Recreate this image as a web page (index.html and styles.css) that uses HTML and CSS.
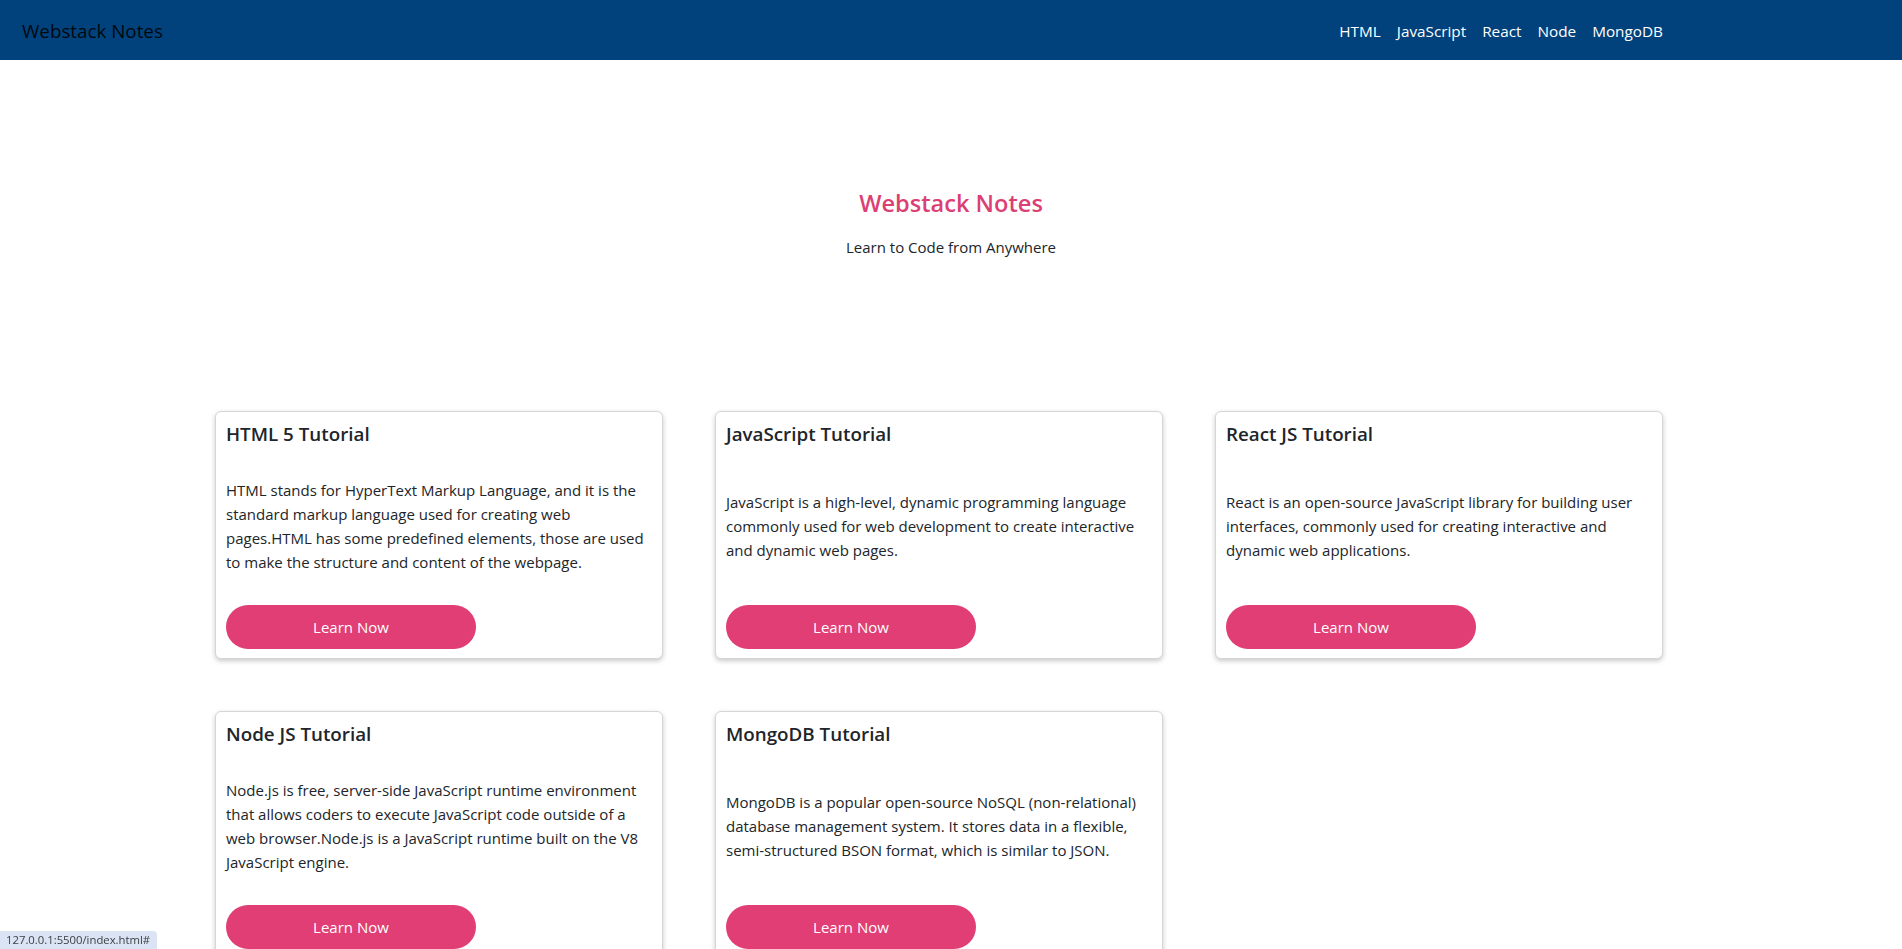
FILE: index.html
```html
<!DOCTYPE html>
<html lang="en">
<head>
<meta charset="utf-8">
<title>Webstack Notes</title>
<link rel="stylesheet" href="styles.css">
</head>
<body>
<nav class="navbar">
  <a class="brand" href="#">Webstack Notes</a>
  <ul class="nav-links">
    <li><a href="#">HTML</a></li>
    <li><a href="#">JavaScript</a></li>
    <li><a href="#">React</a></li>
    <li><a href="#">Node</a></li>
    <li><a href="#">MongoDB</a></li>
  </ul>
</nav>

<header class="hero">
  <h1 class="hero-title">Webstack Notes</h1>
  <p class="hero-sub">Learn to Code from Anywhere</p>
</header>

<main class="cards-wrap">
  <div class="cards">
    <div class="card">
      <h5 class="card-title">HTML 5 Tutorial</h5>
      <p class="card-text">HTML stands for HyperText Markup Language, and it is the standard markup language used for creating web pages.HTML has some predefined elements, those are used to make the structure and content of the webpage.</p>
      <a class="btn" href="#">Learn Now</a>
    </div>
    <div class="card">
      <h5 class="card-title">JavaScript Tutorial</h5>
      <p class="card-text">JavaScript is a high-level, dynamic programming language commonly used for web development to create interactive and dynamic web pages.</p>
      <a class="btn" href="#">Learn Now</a>
    </div>
    <div class="card">
      <h5 class="card-title">React JS Tutorial</h5>
      <p class="card-text">React is an open-source JavaScript library for building user interfaces, commonly used for creating interactive and dynamic web applications.</p>
      <a class="btn" href="#">Learn Now</a>
    </div>
    <div class="card">
      <h5 class="card-title">Node JS Tutorial</h5>
      <p class="card-text">Node.js is free, server-side JavaScript runtime environment that allows coders to execute JavaScript code outside of a web browser.Node.js is a JavaScript runtime built on the V8 JavaScript engine.</p>
      <a class="btn" href="#">Learn Now</a>
    </div>
    <div class="card">
      <h5 class="card-title">MongoDB Tutorial</h5>
      <p class="card-text">MongoDB is a popular open-source NoSQL (non-relational) database management system. It stores data in a flexible, semi-structured BSON format, which is similar to JSON.</p>
      <a class="btn" href="#">Learn Now</a>
    </div>
  </div>
</main>

<div class="status-bar">127.0.0.1:5500/index.html#</div>
</body>
</html>
```
FILE: styles.css
```css
* { box-sizing: border-box; }

html, body {
  margin: 0;
  padding: 0;
}

body {
  font-family: "Open Sans", "Noto Sans", "Liberation Sans", sans-serif;
  font-size: 15px;
  line-height: 24px;
  color: #212529;
  background: #ffffff;
}

a { text-decoration: none; }

/* Navbar */
.navbar {
  height: 60px;
  background: #01427c;
  display: flex;
  align-items: center;
  justify-content: space-between;
  padding: 2px 231px 0 22px;
}

.brand {
  font-size: 18.8px;
  line-height: 28px;
  color: rgba(0, 0, 0, 0.9);
}

.nav-links {
  list-style: none;
  display: flex;
  margin: 0;
  padding: 0;
}

.nav-links a {
  display: block;
  padding: 4px 8px;
  font-size: 15.3px;
  line-height: 24px;
  color: #ffffff;
}

/* Hero */
.hero {
  text-align: center;
  padding: 129px 0 0;
}

.hero-title {
  margin: 0 0 17px;
  font-size: 23.6px;
  line-height: 29px;
  font-weight: 600;
  color: #dc3f73;
}

.hero-sub {
  margin: 0;
  font-size: 15px;
  line-height: 24px;
}

/* Cards */
.cards-wrap {
  width: 1448px;
  margin: 152px 0 0 215px;
}

.cards {
  display: grid;
  grid-template-columns: repeat(3, 448px);
  column-gap: 52px;
  row-gap: 52px;
}

.card {
  min-height: 248px;
  border: 1px solid #d6d6d6;
  border-radius: 6px;
  box-shadow: 0 2px 5px rgba(0, 0, 0, 0.22);
  padding: 10px 13px 9px 10px;
  display: flex;
  flex-direction: column;
  justify-content: space-between;
  align-items: flex-start;
  background: #fff;
}

.card-title {
  margin: 0;
  font-size: 18.8px;
  line-height: 24px;
  font-weight: 600;
  color: #212529;
}

.card-text {
  margin: 0;
  font-size: 15px;
  line-height: 24px;
  color: #212529;
}

.btn {
  display: flex;
  align-items: center;
  justify-content: center;
  width: 250px;
  height: 44px;
  border-radius: 22px;
  background: #e03e74;
  color: #ffffff;
  font-size: 15px;
}

/* Browser status overlay */
.status-bar {
  position: fixed;
  left: 0;
  bottom: 0;
  height: 18px;
  padding: 0 7px 0 6px;
  background: #dbe4f4;
  border-top-right-radius: 4px;
  font-size: 11.3px;
  line-height: 18px;
  color: #3c4043;
}
```
